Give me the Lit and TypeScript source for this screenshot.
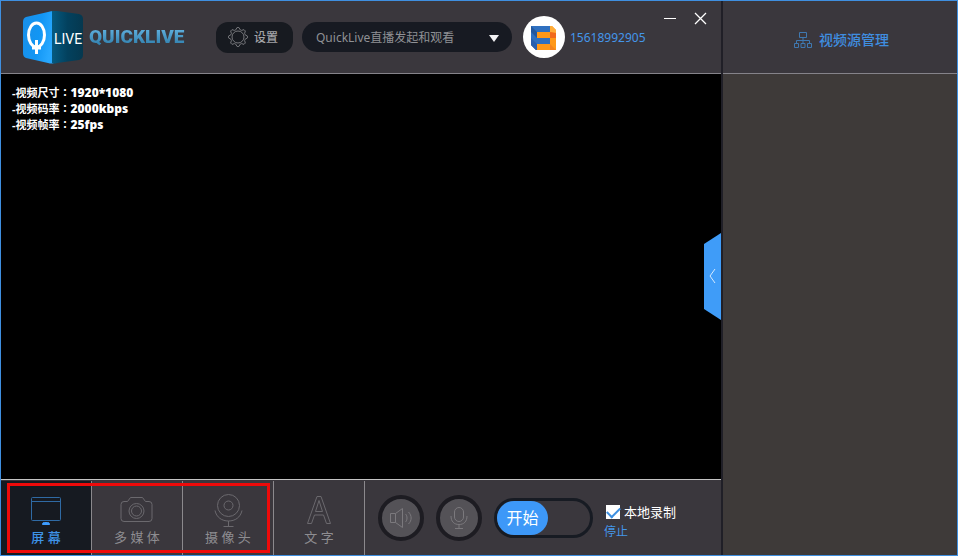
import { LitElement, html, css, svg, TemplateResult } from "lit";
import { customElement, state } from "lit/decorators.js";
import { classMap } from "lit/directives/class-map.js";

interface Source {
  id: string;
  label: string;
  icon: TemplateResult;
}

const SOURCES: Source[] = [
  {
    id: "screen",
    label: "屏 幕",
    icon: svg`<rect x="5.5" y="6.5" width="29" height="23" rx="1"/><path d="M5.5 10.500h29" />
      <path d="M16.500 33.500c0-2 1-2 2-2h3c1 0 2 0 2 2z" fill="#3d9cff" stroke="#3d9cff"/>`,
  },
  {
    id: "media",
    label: "多 媒 体",
    icon: svg`<path d="M13.500 6.500h12l3 4h3.500a3 3 0 0 1 3 3v14a3 3 0 0 1-3 3h-25a3 3 0 0 1-3-3v-14a3 3 0 0 1 3-3h3.500z"/>
      <circle cx="19.500" cy="20" r="7.500"/><circle cx="19.500" cy="20" r="5"/>`,
  },
  {
    id: "camera",
    label: "摄 像 头",
    icon: svg`<circle cx="20.500" cy="14.500" r="11"/><circle cx="20.500" cy="14.500" r="4.500"/>
      <path d="M7 19.500c1.500 7 7 10.500 13.500 10.500s12-3.500 13.500-10.500M20.500 30v5.500M15.500 35.500h10"/>`,
  },
  {
    id: "text",
    label: "文 字",
    icon: svg`<path d="M8.500 32.500 18 5.500h4l9.500 27h-4l-3-8.500h-9l-3 8.500zM16.500 20.500h7L20 9.500z"/>`,
  },
];

const STATS = [
  ["视频尺寸", "1920*1080"],
  ["视频码率", "2000kbps"],
  ["视频帧率", "25fps"],
];

@customElement("app-root")
export class AppRoot extends LitElement {
  @state() private active = "screen";
  @state() private recording = true;

  static styles = css`
    :host {
      display: block;
      font-family: "Noto Sans", "Noto Sans CJK SC", sans-serif;
      font-size: 12px;
      color: #fff;
    }
    * {
      box-sizing: border-box;
    }
    button,
    select {
      font: inherit;
      color: inherit;
      border: 0;
      margin: 0;
      padding: 0;
      background: none;
      cursor: pointer;
    }
    svg {
      display: block;
      fill: none;
    }
    .window {
      display: flex;
      min-height: 100vh;
      background: #3a373d;
      border: 1px solid #3f8fe0;
    }
    .main {
      flex: 1;
      min-width: 0;
      display: flex;
      flex-direction: column;
      border-right: 2px solid #201f27;
    }
    .bar {
      height: 73px;
      flex: none;
      display: flex;
      align-items: center;
      border-bottom: 1px solid #85838a;
    }
    .top {
      padding-left: 20px;
      padding-right: 10px;
    }
    .wordmark {
      margin: 0 28px 0 4px;
      width: 99px;
      font: 900 19px/32px Roboto, "Liberation Sans", sans-serif;
      white-space: nowrap;
      color: transparent;
      background: linear-gradient(#64b4e2 20%, #2c7ba9 80%);
      background-clip: text;
      -webkit-background-clip: text;
    }
    .settings {
      display: flex;
      align-items: center;
      gap: 6px;
      height: 31px;
      width: 77px;
      padding-left: 12px;
      border-radius: 12px;
      background: #171a20;
      color: #a2a3a6;
      font-weight: 500;
    }
    .picker {
      position: relative;
      flex: 0 1 210px;
      margin: 0 11px 0 9px;
    }
    .picker select {
      appearance: none;
      width: 100%;
      height: 30px;
      padding: 0 30px 0 14px;
      border-radius: 15px;
      background: #171a22;
      color: #8f9195;
    }
    .picker svg {
      position: absolute;
      right: 13px;
      top: 12px;
      pointer-events: none;
    }
    .account {
      display: flex;
      align-items: center;
      gap: 5px;
      color: #4496ea;
      text-decoration: none;
    }
    .controls {
      display: flex;
      align-self: flex-start;
      margin-left: auto;
      padding-top: 8px;
      gap: 11px;
    }
    .stage {
      position: relative;
      flex: 1;
      background: #000;
      padding: 10px 11px;
    }
    .stats {
      margin: 0;
      padding: 0;
      list-style: none;
      font-size: 11px;
      line-height: 16px;
      font-weight: 700;
    }
    .stats li {
      height: 16px;
    }
    .stats strong {
      font-size: 12px;
    }
    .colon {
      font-family: "Noto Sans CJK TC", sans-serif;
    }
    .handle {
      position: absolute;
      right: 0;
      top: 50%;
      transform: translateY(-50%);
    }
    .tools {
      flex: none;
      display: flex;
      align-items: stretch;
      height: 76px;
      border-top: 1px solid #c4c4c4;
    }
    .tabs {
      position: relative;
      display: flex;
      padding-top: 1px;
    }
    .tab {
      width: 91px;
      display: flex;
      flex-direction: column;
      align-items: center;
      padding-top: 10px;
      border-right: 1px solid #8b898d;
      color: #8e8d91;
      font-size: 13px;
      line-height: 18px;
      white-space: nowrap;
    }
    .tab svg {
      stroke: #6b696e;
      margin-bottom: 1px;
    }
    .tab.on {
      background: #161a21;
      color: #3e93e8;
      font-weight: 500;
    }
    .tab.on svg {
      stroke: #2f6aa4;
    }
    .mark {
      position: absolute;
      left: 6px;
      top: 3px;
      width: 263px;
      height: 70px;
      border: 3px solid #ee0a0a;
      pointer-events: none;
    }
    .actions {
      display: flex;
      align-items: center;
      gap: 12px;
      padding-left: 13px;
    }
    .round {
      width: 46px;
      height: 46px;
      border-radius: 50%;
      border: 4px solid #1d1c22;
      background: #545257;
      display: grid;
      place-items: center;
    }
    .round svg {
      stroke: #7b797d;
    }
    .switch {
      width: 99px;
      height: 40px;
      border: 3px solid #171b23;
      border-radius: 20px;
      display: flex;
    }
    .knob {
      width: 51px;
      border-radius: 17px;
      background: #3d98f8;
      font-size: 16px;
      line-height: 34px;
    }
    .record {
      display: flex;
      flex-direction: column;
      align-items: flex-start;
      padding-top: 8px;
      margin-left: -1px;
    }
    .check {
      display: flex;
      align-items: center;
      gap: 4px;
      padding-left: 2px;
      font-size: 13px;
      line-height: 20px;
    }
    .check input {
      appearance: none;
      width: 14px;
      height: 14px;
      margin: 0;
      background: #fff;
      display: grid;
      place-items: center;
    }
    .check input:checked::before {
      content: "";
      width: 11px;
      height: 6px;
      border: solid #3d8fe0;
      border-width: 0 0 2px 2px;
      transform: translateY(-1px) rotate(-45deg);
    }
    .stop {
      color: #4496ea;
      line-height: 20px;
    }
    .side {
      flex: 0 0 234px;
      background: #3e3a39;
    }
    .side .bar {
      justify-content: center;
      gap: 6px;
      padding: 6px 0 0 2px;
      background: #3a373d;
    }
    .side h2 {
      margin: 0;
      font-size: 14px;
      line-height: 20px;
      font-weight: 500;
      color: #3f8ee0;
    }
  `;

  private logo() {
    return html`<svg width="64" height="54" viewBox="0 0 64 54" role="img" aria-label="Q LIVE">
      <defs>
        <linearGradient id="face" x1="0" x2="1" y1="0" y2="0.300">
          <stop offset="0" stop-color="#1a8fe8" />
          <stop offset="0.600" stop-color="#1296f4" />
          <stop offset="1" stop-color="#28a8ff" />
        </linearGradient>
        <linearGradient id="flank" x1="0" x2="1" y1="0" y2="0">
          <stop offset="0" stop-color="#065a80" />
          <stop offset="0.500" stop-color="#03415e" />
          <stop offset="1" stop-color="#05384f" />
        </linearGradient>
      </defs>
      <path d="M5 7Q2 8 2 12V43Q2 47 5 48L27 53Q31 54 33 53V1Q30 1 27 2Z" fill="url(#face)" />
      <path d="M31 1Q34 1 36 1L58 4Q62 5 62 9V45Q62 49 58 50L36 53Q33 54 31 53Z" fill="url(#flank)" />
      <ellipse cx="15.500" cy="25" rx="8" ry="12" stroke="#fff" stroke-width="3" />
      <path d="M15.500 30V44M11 38H20" stroke="#fff" stroke-width="3" />
      <text x="33" y="34" fill="#fff" font-size="14" font-family="Roboto, sans-serif">LIVE</text>
    </svg>`;
  }

  private gear() {
    const points: string[] = [];
    for (let i = 0; i < 32; i++) {
      const r = i % 4 < 2 ? 9.5 : 7.5;
      const a = ((i - 0.5) / 32) * Math.PI * 2;
      points.push(`${(10 + r * Math.cos(a)).toFixed(2)},${(10 + r * Math.sin(a)).toFixed(2)}`);
    }
    return html`<svg width="20" height="20" viewBox="0 0 20 20" stroke="#77787c">
      <polygon points=${points.join(" ")} stroke-linejoin="round" />
      <circle cx="10" cy="10" r="6" />
    </svg>`;
  }

  private avatar() {
    return html`<svg width="42" height="42" viewBox="0 0 42 42" aria-hidden="true">
      <circle cx="21" cy="21" r="21" fill="#fff" />
      <path d="M8 10H29L33 14V34H13L8 29Z" fill="#ff9818" />
      <path d="M8 10H27V16H14V22H27V28H14V34H13L8 29Z" fill="#2f70c0" />
      <path d="M8 10 14 16V22L8 16Z" fill="#23589f" />
      <path d="M8 22 14 28V34H13L8 29Z" fill="#285fae" />
      <path d="M27 10H29L33 14V17L27 16Z" fill="#ffac38" />
      <path d="M27 16 33 17V22H27Z" fill="#f26a1c" />
      <path d="M27 28 33 34H27Z" fill="#f5821c" />
    </svg>`;
  }

  render() {
    return html`<div class="window">
      <main class="main">
        <header class="bar top">
          ${this.logo()}
          <span class="wordmark">QUICKLIVE</span>
          <button class="settings">${this.gear()}设置</button>
          <div class="picker">
            <select aria-label="直播频道">
              <option>QuickLive直播发起和观看</option>
            </select>
            <svg width="10" height="8" viewBox="0 0 10 8"><path d="M0 1H10L5 8Z" fill="#f2f2f4" /></svg>
          </div>
          <a class="account" href="#account">${this.avatar()}15618992905</a>
          <div class="controls">
            <button aria-label="最小化">
              <svg width="20" height="20" viewBox="0 0 20 20" stroke="#fff"><path d="M4 9.500H16" /></svg>
            </button>
            <button aria-label="关闭">
              <svg width="20" height="20" viewBox="0 0 20 20" stroke="#fff" stroke-width="1.300">
                <path d="M4 4 15 15M15 4 4 15" />
              </svg>
            </button>
          </div>
        </header>
        <section class="stage">
          <ul class="stats">
            ${STATS.map(
              ([name, value]) =>
                html`<li>-${name}<span class="colon">：</span><strong>${value}</strong></li>`
            )}
          </ul>
          <button class="handle" aria-label="展开">
            <svg width="17" height="88" viewBox="0 0 17 88">
              <path d="M0 11 17 0V87L0 76Z" fill="#3f9cf8" />
              <path d="M11 36 6 43 11 50" stroke="#d5eaff" />
            </svg>
          </button>
        </section>
        <footer class="tools">
          <nav class="tabs">
            ${SOURCES.map(
              (s) => html`<button
                class=${classMap({ tab: true, on: s.id === this.active })}
                @click=${() => (this.active = s.id)}
              >
                <svg width="40" height="36" viewBox="0 0 40 36">${s.icon}</svg>
                ${s.label}
              </button>`
            )}
            <span class="mark"></span>
          </nav>
          <div class="actions">
            <button class="round" aria-label="声音">
              <svg width="26" height="24" viewBox="0 0 26 24">
                <path d="M2.500 7.500H7.500L14.500 2.500V21.500L7.500 16.500H2.500ZM7.500 7.500V16.500M17.500 8C19.500 10 19.500 14 17.500 16M20.500 6C24 9.500 24 14.500 20.500 18" />
              </svg>
            </button>
            <button class="round" aria-label="麦克风">
              <svg width="20" height="24" viewBox="0 0 20 24">
                <rect x="5.500" y="1.500" width="9" height="14" rx="4.500" />
                <path d="M2 10C2 15.500 5 18.500 10 18.500S18 15.500 18 10M10 18.500V22.500M6 22.500H14" />
              </svg>
            </button>
            <div class="switch"><button class="knob">开始</button></div>
            <div class="record">
              <label class="check">
                <input
                  type="checkbox"
                  .checked=${this.recording}
                  @change=${(e: Event) => (this.recording = (e.target as HTMLInputElement).checked)}
                />本地录制
              </label>
              <button class="stop">停止</button>
            </div>
          </div>
        </footer>
      </main>
      <aside class="side">
        <div class="bar">
          <svg width="20" height="18" viewBox="0 0 20 18" stroke="#3f78b0">
            <path d="M6.500 1.500H13.500V6.500H6.500ZM1.500 12.500H5.500V16.500H1.500ZM8 12.500H12V16.500H8ZM14.500 12.500H18.500V16.500H14.500ZM10 6.500V12.500M3.500 12.500V9.500H16.500V12.500" />
          </svg>
          <h2>视频源管理</h2>
        </div>
      </aside>
    </div>`;
  }
}
